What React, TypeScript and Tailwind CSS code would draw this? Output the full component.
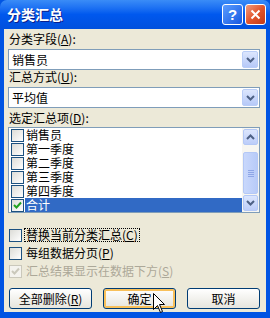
import React from "react"

const font = { fontFamily: '"Noto Sans CJK SC", "Liberation Sans", sans-serif' }

function Chevron({ up = false }: { up?: boolean }) {
  return (
    <svg width="9" height="6" viewBox="0 0 9 6" className={up ? "rotate-180" : ""}>
      <path d="M1 1 L4.5 4.5 L8 1" fill="none" stroke="#4d6185" strokeWidth="2" />
    </svg>
  )
}

function DropButton() {
  return (
    <div className="w-[16px] h-[17px] mr-[1px] rounded-[2px] border border-[#b9cdf7] bg-gradient-to-b from-[#dce6fd] to-[#b6c9f8] flex items-center justify-center">
      <Chevron />
    </div>
  )
}

function Select({ value }: { value: string }) {
  return (
    <div className="ml-[4px] mr-[6px] h-[21px] border border-[#7f9db9] bg-white flex items-center">
      <span className="flex-1 pl-[3px] text-[12px] leading-[14px] text-black">{value}</span>
      <DropButton />
    </div>
  )
}

function Box({ checked = false, disabled = false }: { checked?: boolean; disabled?: boolean }) {
  return (
    <div
      className={
        "w-[13px] h-[13px] border flex items-center justify-center shrink-0 " +
        (disabled
          ? "border-[#cac8bb] bg-[#f4f3ee]"
          : "border-[#1c5180] bg-gradient-to-br from-[#dcdcd7] to-[#ffffff]")
      }
    >
      {checked && (
        <svg width="9" height="9" viewBox="0 0 9 9">
          <path
            d="M1 4 L3.5 6.5 L8 1.5"
            fill="none"
            stroke={disabled ? "#cac8bb" : "#21a121"}
            strokeWidth="2"
          />
        </svg>
      )}
    </div>
  )
}

const items = ["销售员", "第一季度", "第二季度", "第三季度", "第四季度", "合计"]

function Button({ label, hot = false, w }: { label: React.ReactNode; hot?: boolean; w: string }) {
  return (
    <div
      className={
        w +
        " h-[21px] rounded-[3px] border border-[#003c74] bg-gradient-to-b from-[#ffffff] to-[#e6e5dd] flex items-center justify-center text-[12px] text-black " +
        (hot ? "shadow-[inset_0_0_0_2px_#f8c05a]" : "")
      }
    >
      {label}
    </div>
  )
}

export default function App() {
  return (
    <div className="w-[270px] h-[318px] bg-[#0054e3] relative select-none" style={font}>
      {/* title bar */}
      <div className="h-[29px] rounded-t-[7px] bg-gradient-to-b from-[#3a8cf7] via-[#0058ee] to-[#0050dd] flex items-center pl-[7px] pr-[4px]">
        <span className="flex-1 text-white text-[14px] font-bold [text-shadow:1px_1px_0_#0a1e8c]">
          分类汇总
        </span>
        <div className="w-[21px] h-[21px] rounded-[3px] border border-white bg-gradient-to-br from-[#5b9dff] to-[#1656e0] flex items-center justify-center text-white font-bold text-[15px] leading-none mr-[2px]" style={{ fontFamily: '"Liberation Sans", sans-serif' }}>
          ?
        </div>
        <div className="w-[21px] h-[21px] rounded-[3px] border border-white bg-gradient-to-br from-[#f09a7c] via-[#e2552c] to-[#c23a16] flex items-center justify-center">
          <svg width="11" height="11" viewBox="0 0 11 11">
            <path d="M1.5 1.5 L9.5 9.5 M9.5 1.5 L1.5 9.5" stroke="white" strokeWidth="2" />
          </svg>
        </div>
      </div>

      {/* body */}
      <div className="mx-[4px] h-[283px] bg-[#ece9d8] flex flex-col pt-[3px] text-[12px] leading-[14px] text-black">
        <div className="pl-[5px] h-[14px]">
          分类字段(<u>A</u>):
        </div>
        <div className="mt-[3px]">
          <Select value="销售员" />
        </div>
        <div className="pl-[5px] h-[14px]">
          汇总方式(<u>U</u>):
        </div>
        <div className="mt-[3px]">
          <Select value="平均值" />
        </div>
        <div className="pl-[5px] h-[14px] mt-[3px]">
          选定汇总项(<u>D</u>):
        </div>
        <div className="mt-[2px] ml-[4px] mr-[6px] h-[86px] border border-[#7f9db9] bg-white flex">
          <div className="flex-1 flex flex-col pl-[2px]">
            {items.map((it, i) => {
              const sel = i === items.length - 1
              return (
                <div key={it} className="h-[14px] flex items-center">
                  <Box checked={sel} />
                  <span
                    className={
                      "ml-[1px] h-[14px] leading-[14px] flex-1 pl-[1px] " +
                      (sel ? "bg-[#316ac5] text-white" : "")
                    }
                  >
                    {it}
                  </span>
                </div>
              )
            })}
          </div>
          {/* scrollbar */}
          <div className="w-[17px] bg-[#f7f6f1] flex flex-col">
            <div className="h-[16px] mt-[1px] mx-[1px] rounded-[2px] border border-[#b4c8f6] bg-gradient-to-b from-[#dce6fd] to-[#bccdf9] flex items-center justify-center">
              <Chevron up />
            </div>
            <div className="h-[42px] mt-[7px] mx-[1px] rounded-[2px] border border-[#b4c8f6] bg-gradient-to-r from-[#c9d8fc] to-[#b8cbf8] flex flex-col items-center justify-center gap-[1px]">
              <div className="w-[6px] h-[1px] bg-[#8ea6e6]" />
              <div className="w-[6px] h-[1px] bg-[#8ea6e6]" />
              <div className="w-[6px] h-[1px] bg-[#8ea6e6]" />
              <div className="w-[6px] h-[1px] bg-[#8ea6e6]" />
            </div>
            <div className="flex-1" />
            <div className="h-[16px] mb-[1px] mx-[1px] rounded-[2px] border border-[#b4c8f6] bg-gradient-to-b from-[#dce6fd] to-[#bccdf9] flex items-center justify-center">
              <Chevron />
            </div>
          </div>
        </div>

        <div className="mt-[13px] pl-[5px] flex flex-col">
          <div className="h-[18px] flex items-center">
            <Box />
            <span className="ml-[2px] px-[1px] border border-dotted border-black leading-[12px]">
              替换当前分类汇总(<u>C</u>)
            </span>
          </div>
          <div className="h-[18px] flex items-center">
            <Box />
            <span className="ml-[4px]">
              每组数据分页(<u>P</u>)
            </span>
          </div>
          <div className="h-[18px] flex items-center text-[#aca899]">
            <Box checked disabled />
            <span className="ml-[4px]">
              汇总结果显示在数据下方(<u>S</u>)
            </span>
          </div>
        </div>

        <div className="mt-[8px] pl-[5px] flex gap-[11px]">
          <Button w="w-[83px]" label={<span>全部删除(<u>R</u>)</span>} />
          <Button w="w-[73px]" label="确定" hot />
          <Button w="w-[73px]" label="取消" />
        </div>
      </div>

      {/* mouse cursor */}
      <svg className="absolute left-[153px] top-[293px]" width="13" height="21" viewBox="0 0 13 21">
        <path
          d="M0.5 0.5 L0.5 16.5 L4.5 12.5 L7.5 19.5 L9.5 18.5 L6.5 11.5 L11.5 11.5 Z"
          fill="white"
          stroke="black"
          strokeWidth="1"
        />
      </svg>
    </div>
  )
}
